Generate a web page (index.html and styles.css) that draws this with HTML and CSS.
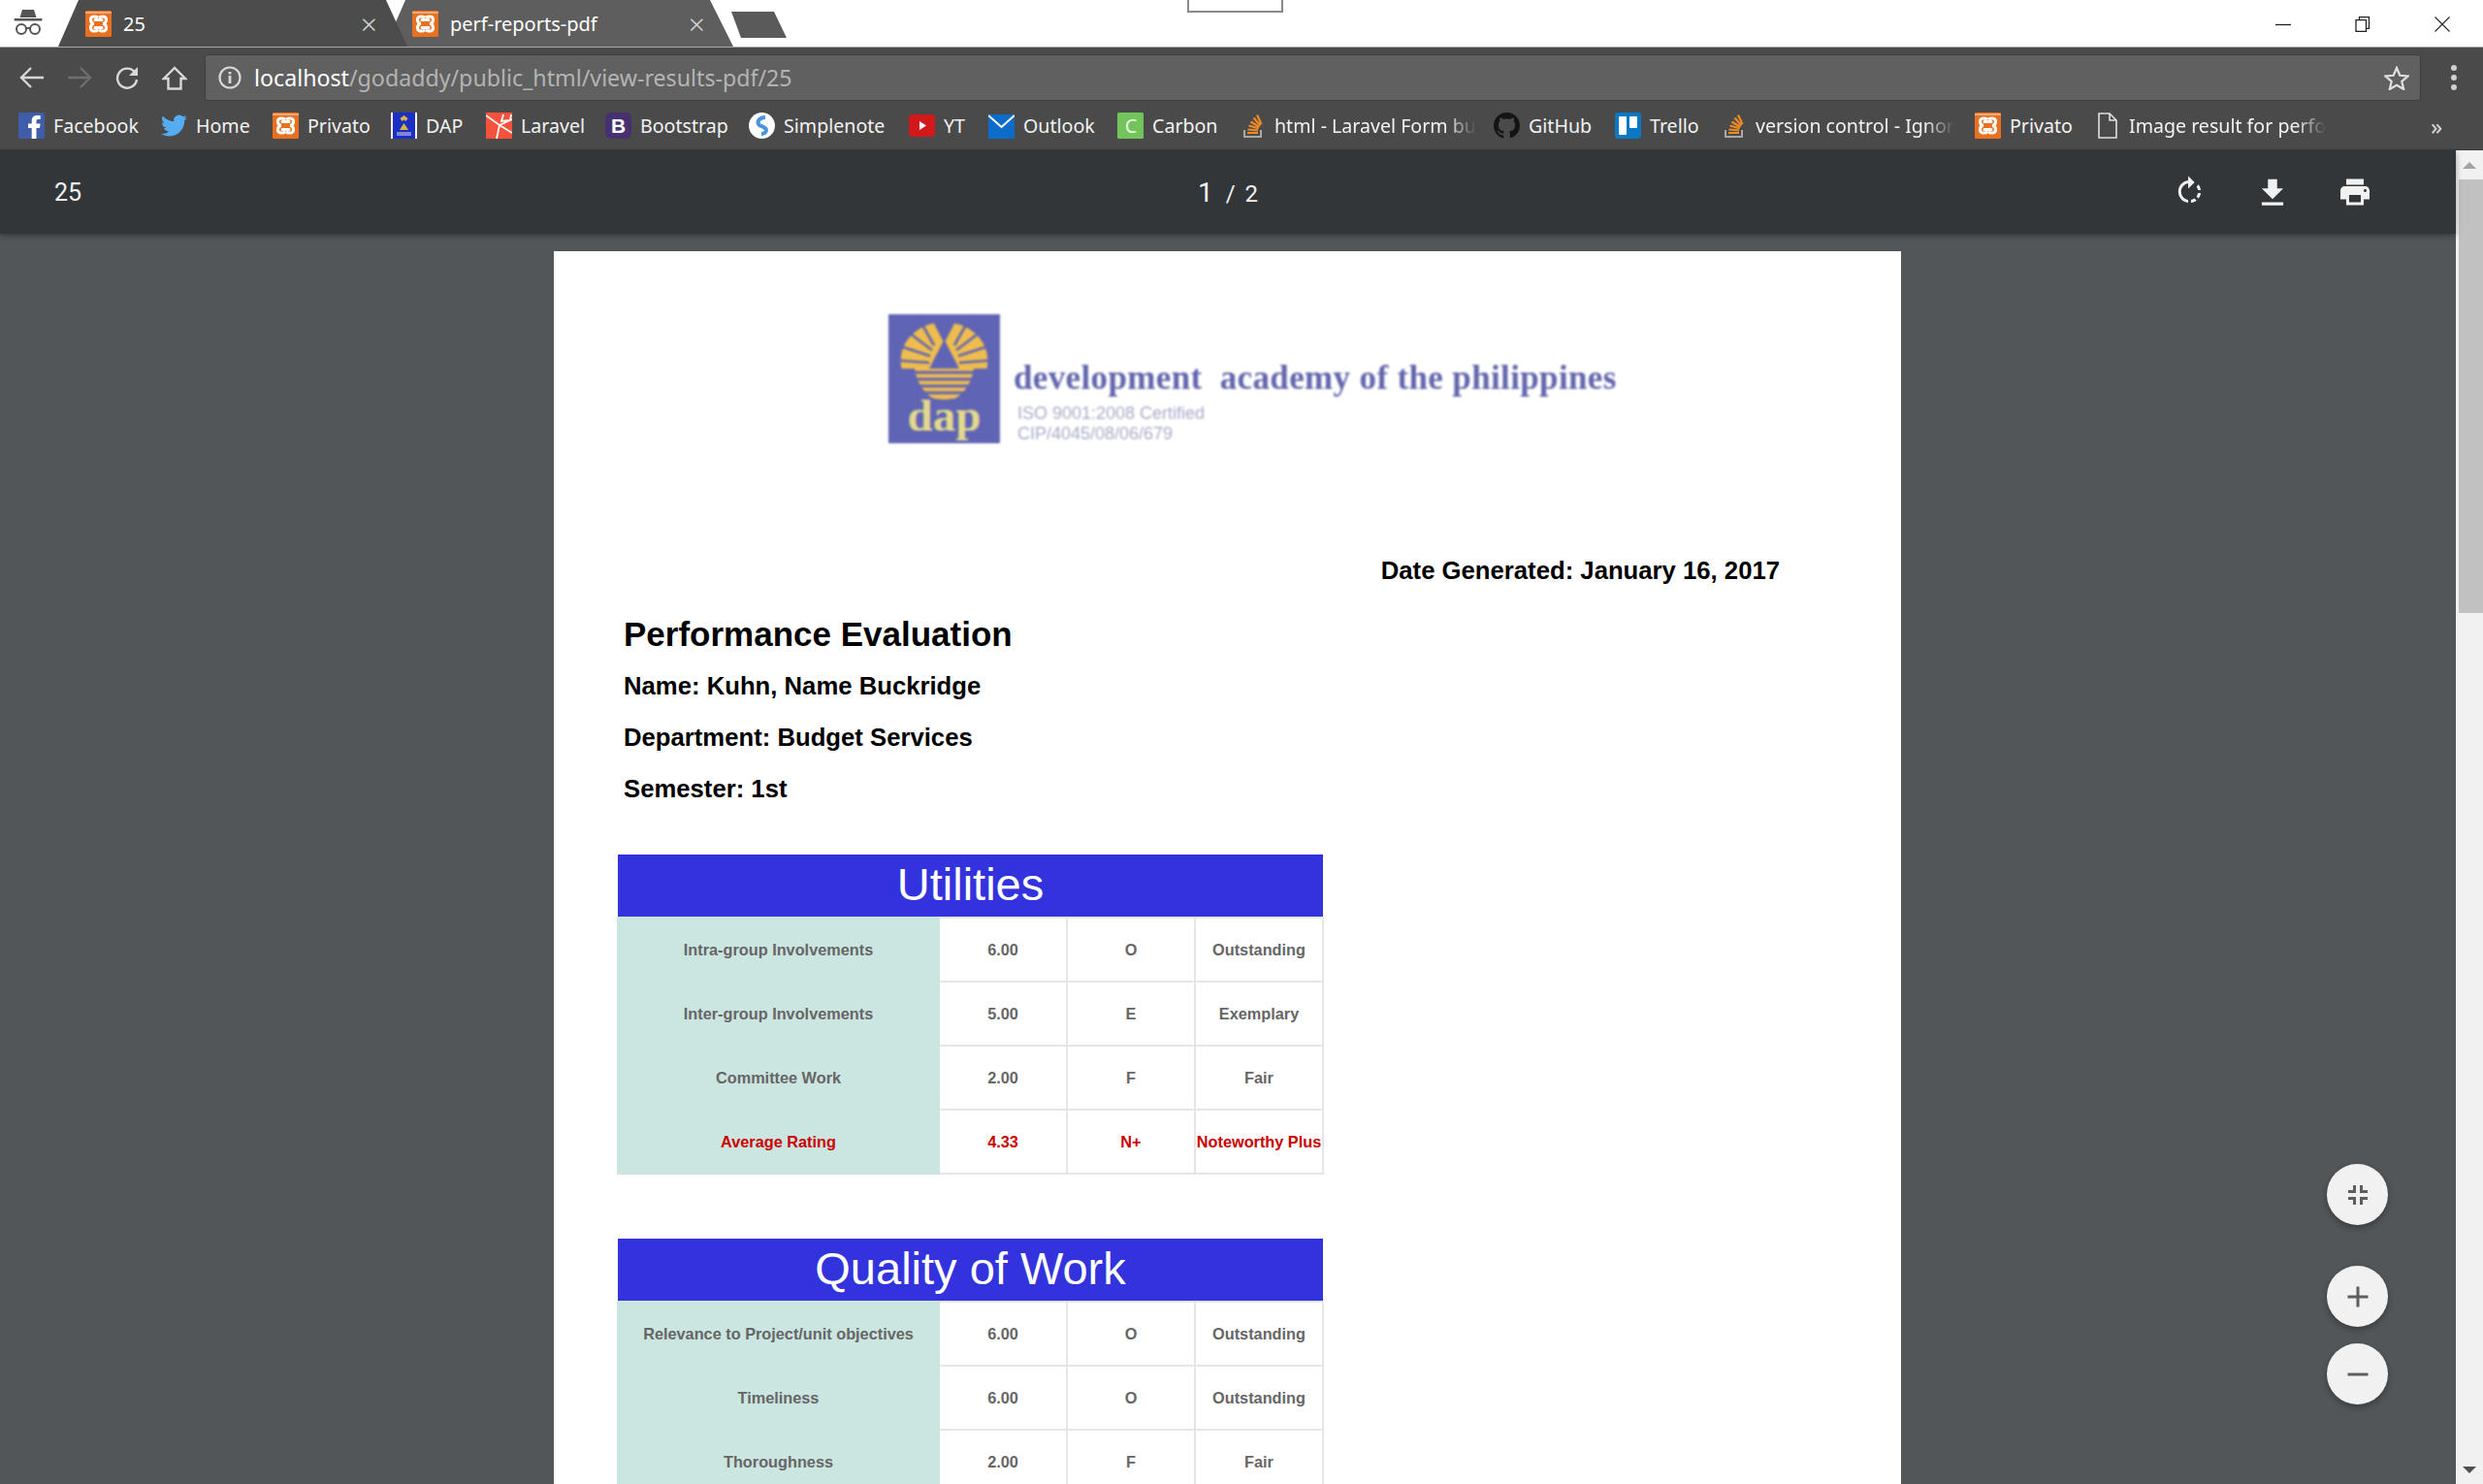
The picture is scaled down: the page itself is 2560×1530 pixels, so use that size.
FILE: index.html
```html
<!DOCTYPE html>
<html lang="en">
<head>
<meta charset="utf-8">
<title>25</title>
<link rel="stylesheet" href="styles.css">
</head>
<body>
<svg class="defs" width="0" height="0" aria-hidden="true">
  <symbol id="xampp" viewBox="0 0 27 27">
    <rect width="27" height="27" rx="1.5" fill="#e8701f"/>
    <rect x="0" y="1" width="27" height="2" fill="#f2a878"/>
    <path d="M12 6.5C8 5 5 6.5 5.5 10c.3 2 1.8 3.4 3.5 3.5-1.7.1-3.2 1.5-3.5 3.5-.5 3.500 2.500 5 6.500 3.500M15 6.500C19 5 22 6.500 21.500 10c-.3 2-1.800 3.400-3.500 3.500 1.700.1 3.200 1.500 3.500 3.500.5 3.500-2.500 5-6.500 3.500M10 9.500h7M10 17.500h7" fill="none" stroke="#fff" stroke-width="3" stroke-linecap="round"/>
  </symbol>
  <symbol id="stack" viewBox="0 0 27 27">
    <path d="M5 18v7h17v-7" fill="none" stroke="#a8a8a8" stroke-width="2"/>
    <path d="M8 21h11M8.500 17.500l10.500 1M9.500 13.500l10 3M11.500 9.500l8.800 5.500M14.500 5.500l7 8M18 2.500l4.500 9.500" fill="none" stroke="#f08a24" stroke-width="2.200"/>
  </symbol>
</svg>
<div class="app">
  <header class="titlebar">
    <div class="incognito">
      <svg width="30" height="28" viewBox="0 0 30 28"><path d="M9 1h12l2.500 8H6.500z" fill="#555"/><rect x="0.500" y="10" width="29" height="2.500" rx="1" fill="#555"/><g fill="none" stroke="#555" stroke-width="2"><circle cx="8" cy="21" r="5"/><circle cx="22" cy="21" r="5"/><path d="M13 20h4"/></g></svg>
    </div>
    <div class="tab tab-active">
      <svg class="fav"><use href="#xampp"/></svg>
      <span class="tab-title">25</span>
      <span class="tab-close">×</span>
    </div>
    <div class="tab tab-idle">
      <svg class="fav"><use href="#xampp"/></svg>
      <span class="tab-title">perf-reports-pdf</span>
      <span class="tab-close">×</span>
    </div>
    <div class="newtab"></div>
    <div class="winctl">
      <svg width="16" height="16" viewBox="0 0 16 16"><path d="M0 8.500h16" stroke="#222" stroke-width="1.300"/></svg>
      <svg width="16" height="16" viewBox="0 0 16 16"><path d="M4.500 3V.7h10v11.600h-3M1 3.700h10.500v11.600H1z" fill="#fff" stroke="#222" stroke-width="1.300"/></svg>
      <svg width="16" height="16" viewBox="0 0 16 16"><path d="M.5.500l15 15M15.500.500l-15 15" stroke="#222" stroke-width="1.100"/></svg>
    </div>
    <div class="resize-ghost"></div>
  </header>

  <nav class="toolbar">
    <div class="navbtn"><svg width="26" height="24" viewBox="0 0 26 24"><path d="M25 12H3M12 2L2 12l10 10" fill="none" stroke="#d8d8d8" stroke-width="2.400"/></svg></div>
    <div class="navbtn"><svg width="26" height="24" viewBox="0 0 26 24"><path d="M1 12h22M14 2l10 10-10 10" fill="none" stroke="#6f6f6f" stroke-width="2.400"/></svg></div>
    <div class="navbtn"><svg width="26" height="24" viewBox="0 0 26 24"><path d="M21 6.500A10 10 0 1 0 23 14" fill="none" stroke="#d8d8d8" stroke-width="2.400"/><path d="M24 1v9h-9z" fill="#d8d8d8"/></svg></div>
    <div class="navbtn"><svg width="26" height="25" viewBox="0 0 26 25"><path d="M13 2L2 13h4.500v10.500h13V13H24z" fill="none" stroke="#d8d8d8" stroke-width="2.400"/></svg></div>
    <div class="addr">
      <svg width="24" height="24" viewBox="0 0 24 24"><circle cx="12" cy="12" r="10.500" fill="none" stroke="#d8d8d8" stroke-width="2.200"/><path d="M10.600 10h2.800v8h-2.800zM10.600 6h2.800v2.600h-2.800z" fill="#d8d8d8"/></svg>
      <span class="url"><b class="host">localhost</b>/godaddy/public_html/view-results-pdf/25</span>
      <svg class="star" width="26" height="25" viewBox="0 0 26 25"><path d="M13 2l3.300 7.800 8.200.7-6.200 5.400 1.900 8.100L13 19.700 5.800 24l1.900-8.100L1.500 10.500l8.200-.7z" fill="none" stroke="#e0e0e0" stroke-width="2.200"/></svg>
    </div>
    <div class="menu"><i></i><i></i><i></i></div>
  </nav>

  <div class="bookmarks">
    <a class="bm"><svg class="fav" viewBox="0 0 27 27"><rect width="27" height="27" rx="1.500" fill="#3f5da8"/><path d="M18.500 27V16h3.500l.5-4.500h-4V9c0-1.300.4-2 2-2h2.200V3h-3.500c-3.500 0-5.500 2.100-5.500 5.500v3H10V16h3.700v11z" fill="#fff"/></svg><span>Facebook</span></a>
    <a class="bm"><svg class="fav" viewBox="0 0 24 24"><path d="M23.950 4.570a10 10 0 0 1-2.820.77 4.960 4.960 0 0 0 2.160-2.720c-.95.55-2 .96-3.120 1.190a4.920 4.920 0 0 0-8.380 4.480C7.690 8.100 4.070 6.130 1.640 3.160a4.820 4.820 0 0 0-.67 2.480c0 1.710.87 3.210 2.190 4.100a4.900 4.900 0 0 1-2.230-.61v.06a4.920 4.920 0 0 0 3.950 4.830 4.900 4.900 0 0 1-2.210.08 4.940 4.940 0 0 0 4.600 3.420A9.870 9.870 0 0 1 0 19.540a13.940 13.940 0 0 0 7.550 2.210c9.050 0 14-7.500 14-13.980 0-.21 0-.42-.02-.63a9.940 9.940 0 0 0 2.460-2.550z" fill="#55acee"/></svg><span>Home</span></a>
    <a class="bm"><svg class="fav"><use href="#xampp"/></svg><span>Privato</span></a>
    <a class="bm"><svg class="fav" viewBox="0 0 27 27"><rect width="27" height="27" fill="#fff"/><rect x="2" width="23" height="27" fill="#1c2fc4"/><path d="M13.500 3l4 3-2 3-2-1.500L11.500 9l-2-3zM13.500 11l4.500 7h-9z" fill="#d9b53c"/><rect x="6" y="20" width="15" height="4" fill="#7f86d8"/></svg><span>DAP</span></a>
    <a class="bm"><svg class="fav" viewBox="0 0 27 27"><rect width="27" height="27" fill="#f4523b"/><path d="M0 3l14 10 13-6M14 13l-3 14M14 13l13 8M18 2l-2 7 9-1 1-6" fill="none" stroke="#fff" stroke-width="1.800"/></svg><span>Laravel</span></a>
    <a class="bm"><svg class="fav" viewBox="0 0 27 27"><rect width="27" height="27" rx="6" fill="#46306f"/><text x="13.500" y="21" class="glyph-b">B</text></svg><span>Bootstrap</span></a>
    <a class="bm"><svg class="fav" viewBox="0 0 27 27"><circle cx="13.500" cy="13.500" r="13.500" fill="#fff"/><path d="M17 5C11 5 8.500 9 10 12c1.500 3 7.500 2 8 6 .3 2.500-2 4-5 4" fill="none" stroke="#4a96dc" stroke-width="4"/></svg><span>Simplenote</span></a>
    <a class="bm"><svg class="fav" viewBox="0 0 27 27"><rect y="2" width="27" height="23" rx="4" fill="#d3181c"/><path d="M11 9l7 4.500-7 4.500z" fill="#fff"/></svg><span>YT</span></a>
    <a class="bm"><svg class="fav" viewBox="0 0 27 27"><rect y="2" width="27" height="25" fill="#0d6cc9"/><path d="M0 3l13.500 12L27 3" fill="none" stroke="#fff" stroke-width="2"/></svg><span>Outlook</span></a>
    <a class="bm"><svg class="fav" viewBox="0 0 27 27"><rect width="27" height="27" rx="1.500" fill="#74c45c"/><text x="14" y="21" class="glyph-c">C</text></svg><span>Carbon</span></a>
    <a class="bm"><svg class="fav"><use href="#stack"/></svg><span class="fade">html - Laravel Form bu</span></a>
    <a class="bm"><svg class="fav" viewBox="0 0 16 16"><path d="M8 0C3.580 0 0 3.580 0 8c0 3.540 2.290 6.530 5.470 7.590.4.070.55-.17.55-.38 0-.19-.01-.82-.01-1.490-2.010.37-2.530-.49-2.690-.94-.09-.23-.48-.94-.82-1.130-.28-.15-.68-.52-.01-.53.63-.01 1.080.58 1.230.82.72 1.210 1.870.87 2.330.66.07-.52.28-.87.51-1.070-1.780-.2-3.640-.89-3.640-3.950 0-.87.31-1.590.82-2.150-.08-.2-.36-1.020.08-2.120 0 0 .67-.21 2.200.82.64-.18 1.320-.27 2-.27.68 0 1.360.09 2 .27 1.530-1.040 2.200-.82 2.200-.82.44 1.100.16 1.920.08 2.120.51.56.82 1.270.82 2.150 0 3.070-1.870 3.750-3.650 3.950.29.25.54.73.54 1.480 0 1.070-.01 1.930-.01 2.200 0 .21.15.46.55.38A8.013 8.013 0 0016 8c0-4.420-3.580-8-8-8z" fill="#141414"/></svg><span>GitHub</span></a>
    <a class="bm"><svg class="fav" viewBox="0 0 27 27"><rect width="27" height="27" rx="3" fill="#0a78c2"/><rect x="4" y="4" width="8" height="19" rx="1" fill="#fff"/><rect x="15" y="4" width="8" height="12" rx="1" fill="#fff"/></svg><span>Trello</span></a>
    <a class="bm"><svg class="fav"><use href="#stack"/></svg><span class="fade">version control - Ignor</span></a>
    <a class="bm"><svg class="fav"><use href="#xampp"/></svg><span>Privato</span></a>
    <a class="bm"><svg class="fav" viewBox="0 0 27 27"><path d="M5 1h11l7 7v18H5zM16 1v7h7" fill="none" stroke="#e0e0e0" stroke-width="1.600"/></svg><span class="fade">Image result for perfo</span></a>
    <span class="more">»</span>
  </div>

  <div class="viewer">
    <main class="main">
      <div class="pdfbar">
        <div class="pdf-title">25</div>
        <div class="pdf-pages"><span class="cur">1</span><span class="sep">/</span><span class="tot">2</span></div>
        <div class="pdf-tools">
          <div class="tool"><svg width="35" height="35" viewBox="0 0 24 24"><path fill="#f1f1f1" d="M15.550 5.550L11 1v3.070C7.060 4.560 4 7.920 4 12s3.050 7.440 7 7.930v-2.020c-2.840-.48-5-2.940-5-5.910s2.160-5.430 5-5.910V10l4.550-4.450zM19.930 11c-.17-1.390-.72-2.730-1.620-3.890l-1.420 1.420c.54.75.88 1.600 1.020 2.470h2.020zM13 17.900v2.020c1.390-.17 2.740-.71 3.900-1.610l-1.440-1.440c-.75.54-1.590.89-2.460 1.030zm3.890-2.420l1.420 1.410c.9-1.160 1.450-2.500 1.620-3.890h-2.020c-.14.87-.48 1.720-1.020 2.480z"/></svg></div>
          <div class="tool"><svg width="38" height="38" viewBox="0 0 24 24"><path fill="#f1f1f1" d="M19 9h-4V3H9v6H5l7 7 7-7zM5 18v2h14v-2H5z"/></svg></div>
          <div class="tool"><svg width="36" height="36" viewBox="0 0 24 24"><path fill="#f1f1f1" d="M19 8H5c-1.660 0-3 1.340-3 3v6h4v4h12v-4h4v-6c0-1.660-1.340-3-3-3zm-3 11H8v-5h8v5zm3-7c-.55 0-1-.45-1-1s.45-1 1-1 1 .45 1 1-.45 1-1 1zm-1-9H6v4h12V3z"/></svg></div>
        </div>
      </div>
      <div class="canvas">
        <article class="page">
          <div class="logo">
            <svg class="logo-mark" width="115" height="133" viewBox="0 0 115 133">
              <rect width="115" height="133" fill="#5f64b4"/>
              <ellipse cx="57.500" cy="48" rx="45" ry="40" fill="#efbd4e"/>
              <path d="M57.500 30L42 0h31zM0 56h27c2 14 9 26 24 34H0zM115 56H88c-2 14-9 26-24 34h51z" fill="#5f64b4"/>
              <g fill="none" stroke="#5f64b4">
                <path stroke-width="2.600" d="M47 32L30 2M45 37L12 12M43 43L3 30M42 50L2 47M68 32L85 2M70 37L103 12M72 43L112 30M73 50L113 47"/>
                <path stroke-width="3" d="M20 60h75M20 67h75M20 74h75M20 81h75"/>
              </g>
              <path d="M57.500 26L42 56h31z" fill="#5f64b4"/>
              <text x="57.500" y="120" class="dap-word">dap</text>
            </svg>
            <div class="logo-text">
              <div class="logo-name">development&nbsp; academy of the philippines</div>
              <div class="logo-iso iso-first">ISO 9001:2008 Certified</div>
              <div class="logo-iso">CIP/4045/08/06/679</div>
            </div>
          </div>
          <p class="date">Date Generated: January 16, 2017</p>
          <h1 class="title">Performance Evaluation</h1>
          <p class="info first">Name: Kuhn, Name Buckridge</p>
          <p class="info">Department: Budget Services</p>
          <p class="info">Semester: 1st</p>

          <table class="rating">
            <colgroup><col class="c1"><col class="c2"><col class="c2"><col class="c2"></colgroup>
            <thead><tr><th colspan="4">Utilities</th></tr></thead>
            <tbody>
              <tr><td>Intra-group Involvements</td><td>6.00</td><td>O</td><td>Outstanding</td></tr>
              <tr><td>Inter-group Involvements</td><td>5.00</td><td>E</td><td>Exemplary</td></tr>
              <tr><td>Committee Work</td><td>2.00</td><td>F</td><td>Fair</td></tr>
              <tr class="avg"><td>Average Rating</td><td>4.33</td><td>N+</td><td>Noteworthy Plus</td></tr>
            </tbody>
          </table>

          <table class="rating second">
            <colgroup><col class="c1"><col class="c2"><col class="c2"><col class="c2"></colgroup>
            <thead><tr><th colspan="4">Quality of Work</th></tr></thead>
            <tbody>
              <tr><td>Relevance to Project/unit objectives</td><td>6.00</td><td>O</td><td>Outstanding</td></tr>
              <tr><td>Timeliness</td><td>6.00</td><td>O</td><td>Outstanding</td></tr>
              <tr><td>Thoroughness</td><td>2.00</td><td>F</td><td>Fair</td></tr>
            </tbody>
          </table>
        </article>
      </div>
      <div class="fabs">
        <div class="fab fit"><svg width="24" height="24" viewBox="0 0 24 24"><path d="M8.500 2v6.500H2M15.500 2v6.500H22M8.500 22v-6.500H2M15.500 22v-6.500H22" fill="none" stroke="#5e5e5e" stroke-width="3"/></svg></div>
        <div class="fab plus"><svg width="24" height="24" viewBox="0 0 24 24"><path d="M1.500 12h21M12 1.500v21" stroke="#5e5e5e" stroke-width="3"/></svg></div>
        <div class="fab"><svg width="24" height="24" viewBox="0 0 24 24"><path d="M1.500 12h21" stroke="#5e5e5e" stroke-width="3"/></svg></div>
      </div>
    </main>
    <aside class="scrollbar">
      <div class="sb-btn"><i class="arrow up"></i></div>
      <div class="sb-thumb"></div>
      <div class="sb-fill"></div>
      <div class="sb-btn"><i class="arrow down"></i></div>
    </aside>
  </div>
</div>
</body>
</html>
```
FILE: styles.css
```css
* { box-sizing: border-box; }
html, body { margin: 0; padding: 0; height: 100%; overflow: hidden; }
body { font-family: "Noto Sans", "Open Sans", sans-serif; background: #525659; }
.defs { display: block; height: 0; }
.app { width: 2560px; height: 1530px; display: flex; flex-direction: column; overflow: hidden; }

/* title bar */
.titlebar { height: 48px; flex: none; background: #fff; display: flex; align-items: stretch; position: relative; }
.incognito { width: 60px; flex: none; padding: 9px 0 0 14px; }
.tab { height: 48px; flex: none; display: flex; align-items: center; padding-left: 28px; color: #fff; position: relative; }
.tab-active { width: 360px; background: #4c4c4c; z-index: 2; clip-path: polygon(0 100%, 21px 0, 338px 0, 360px 100%); padding-right: 31px; }
.tab-idle { width: 359px; margin-left: -23px; background: #5e5e5e; z-index: 1; clip-path: polygon(0 100%, 21px 0, 335px 0, 359px 100%); padding-right: 29px; }
.fav { width: 27px; height: 27px; flex: none; display: block; }
.tab-title { margin-left: 12px; font-size: 20px; line-height: 27px; }
.tab-close { margin-left: auto; font-size: 30px; line-height: 27px; color: #d4d4d4; font-weight: 300; }
.newtab { width: 57px; height: 27px; margin: 12px 0 0 -2px; background: #5a5a5a; clip-path: polygon(0 0, 44px 0, 57px 100%, 10px 100%); flex: none; }
.winctl { margin-left: auto; display: flex; gap: 66px; padding: 17px 34px 0 0; align-items: flex-start; }
.resize-ghost { position: absolute; left: 1224px; top: -2px; width: 99px; height: 15px; background: #fff; border: 2px solid #8a8a8a; }

/* toolbar */
.toolbar { height: 57px; flex: none; background: #4a4a4a; border-top: 1px solid #aaa; display: flex; align-items: center; padding: 6px 0 0 8px; }
.navbtn { width: 49px; flex: none; display: flex; justify-content: center; }
.addr { width: 2285px; height: 48px; margin-left: 7px; background: #606060; border: 1px solid #3e3e3e; border-radius: 3px; display: flex; align-items: center; padding: 0 11px 0 13px; flex: none; }
.url { margin-left: 13px; font-size: 23.200px; color: #b4b4b4; line-height: 34px; }
.host { color: #fff; font-weight: 400; }
.star { margin-left: auto; }
.menu { margin-left: 31px; display: flex; flex-direction: column; gap: 4px; }
.menu i { width: 6px; height: 6px; border-radius: 50%; background: #cfcfcf; display: block; }

/* bookmarks */
.bookmarks { height: 50px; flex: none; background: #4a4a4a; padding-left: 19px; display: grid; grid-template-columns: 147px 115px 122px 98px 123px 148px 165px 82px 133px 126px 262px 125px 109px 262px 123px 347px 20px; align-items: center; border-bottom: 1px solid #3c3c3c; }
.bm { display: flex; align-items: center; gap: 9px; color: #f2f2f2; font-size: 19.600px; white-space: nowrap; }
.fade { -webkit-mask-image: linear-gradient(90deg, #000 85%, transparent); mask-image: linear-gradient(90deg, #000 85%, transparent); }
.more { color: #d8d8d8; font-size: 24px; line-height: 24px; }
.glyph-b { font: 700 21px "Liberation Sans", sans-serif; fill: #fff; text-anchor: middle; }
.glyph-c { font: 400 20px "Noto Sans", sans-serif; fill: #e8f6e2; text-anchor: middle; }

/* viewer */
.viewer { flex: 1; display: flex; min-height: 0; }
.main { flex: 1; position: relative; display: flex; flex-direction: column; min-width: 0; background: #525659; }
.pdfbar { height: 86px; flex: none; background: #323639; display: grid; grid-template-columns: 1fr auto 1fr; align-items: center; box-shadow: 0 2px 6px rgba(0,0,0,.35); position: relative; z-index: 1; color: #f1f1f1; font-family: Roboto, sans-serif; }
.pdf-title { padding-left: 56px; font-size: 25px; }
.pdf-pages { display: flex; align-items: baseline; }
.cur { font-size: 28px; }
.sep { font-size: 24px; margin: 0 10px 0 13px; }
.tot { font-size: 24px; }
.pdf-tools { display: flex; justify-content: flex-end; padding: 2px 62px 0 0; }
.tool { width: 85px; display: flex; justify-content: center; }
.canvas { flex: 1; min-height: 0; overflow: hidden; padding: 18px 0 0 571px; }
.page { width: 1389px; min-height: 1400px; background: #fff; padding-top: 65px; font-family: "Liberation Sans", Arial, sans-serif; color: #000; }

/* logo */
.logo { display: flex; margin-left: 345px; align-items: flex-start; filter: blur(1.200px); height: 133px; }
.logo-mark { flex: none; }
.dap-word { font: 700 47px "Liberation Serif", serif; fill: #e3d98c; text-anchor: middle; }
.logo-text { margin-left: 14px; padding-top: 46px; }
.logo-name { font: 700 35px/40px "Liberation Serif", serif; color: #6266ac; letter-spacing: .360px; white-space: nowrap; }
.logo-iso { font-size: 18px; line-height: 21px; color: #a9abc8; margin-left: 4px; }
.iso-first { margin-top: 6px; }

.date { margin: 113px 125px 0 0; text-align: right; font-size: 25.700px; line-height: 36px; font-weight: 700; }
.title { margin: 26px 0 0 72px; font-size: 35px; line-height: 44px; font-weight: 700; }
.info { margin: 0 0 0 72px; font-size: 25.700px; line-height: 53px; font-weight: 700; }
.info.first { margin-top: 5px; }

/* tables */
.rating { width: 727px; margin: 41px 0 0 65px; border-collapse: collapse; table-layout: fixed; font-size: 16.300px; font-weight: 700; color: #666; }
.rating.second { margin-top: 66px; }
.c1 { width: 331px; }
.c2 { width: 132px; }
.rating th { height: 65px; background: #3333dd; color: #fff; font-size: 47px; font-weight: 400; padding: 0 0 3px; }
.rating td { height: 66px; padding: 0; text-align: center; border: 2px solid #e6e6e6; background: #fff; white-space: nowrap; }
.rating td:first-child { background: #cbe5e0; border-color: #cbe5e0; }
.avg td { color: #cc0000; }

/* floating buttons */
.fabs { position: absolute; right: 70px; bottom: 82px; display: flex; flex-direction: column; gap: 17px; z-index: 2; }
.fab { width: 63px; height: 63px; border-radius: 50%; background: #f1f1f1; box-shadow: 0 3px 6px rgba(0,0,0,.3); display: flex; align-items: center; justify-content: center; }
.fit { margin-bottom: 25px; }

/* scrollbar */
.scrollbar { width: 28px; flex: none; background: #f1f1f1; display: flex; flex-direction: column; }
.sb-btn { height: 30px; flex: none; display: flex; align-items: center; justify-content: center; }
.sb-thumb { height: 447px; margin-left: 3px; background: #c1c1c1; flex: none; }
.sb-fill { flex: 1; }
.arrow { width: 0; height: 0; display: block; border-left: 7px solid transparent; border-right: 7px solid transparent; }
.arrow.up { border-bottom: 7px solid #a3a3a3; }
.arrow.down { border-top: 7px solid #505050; }
```
